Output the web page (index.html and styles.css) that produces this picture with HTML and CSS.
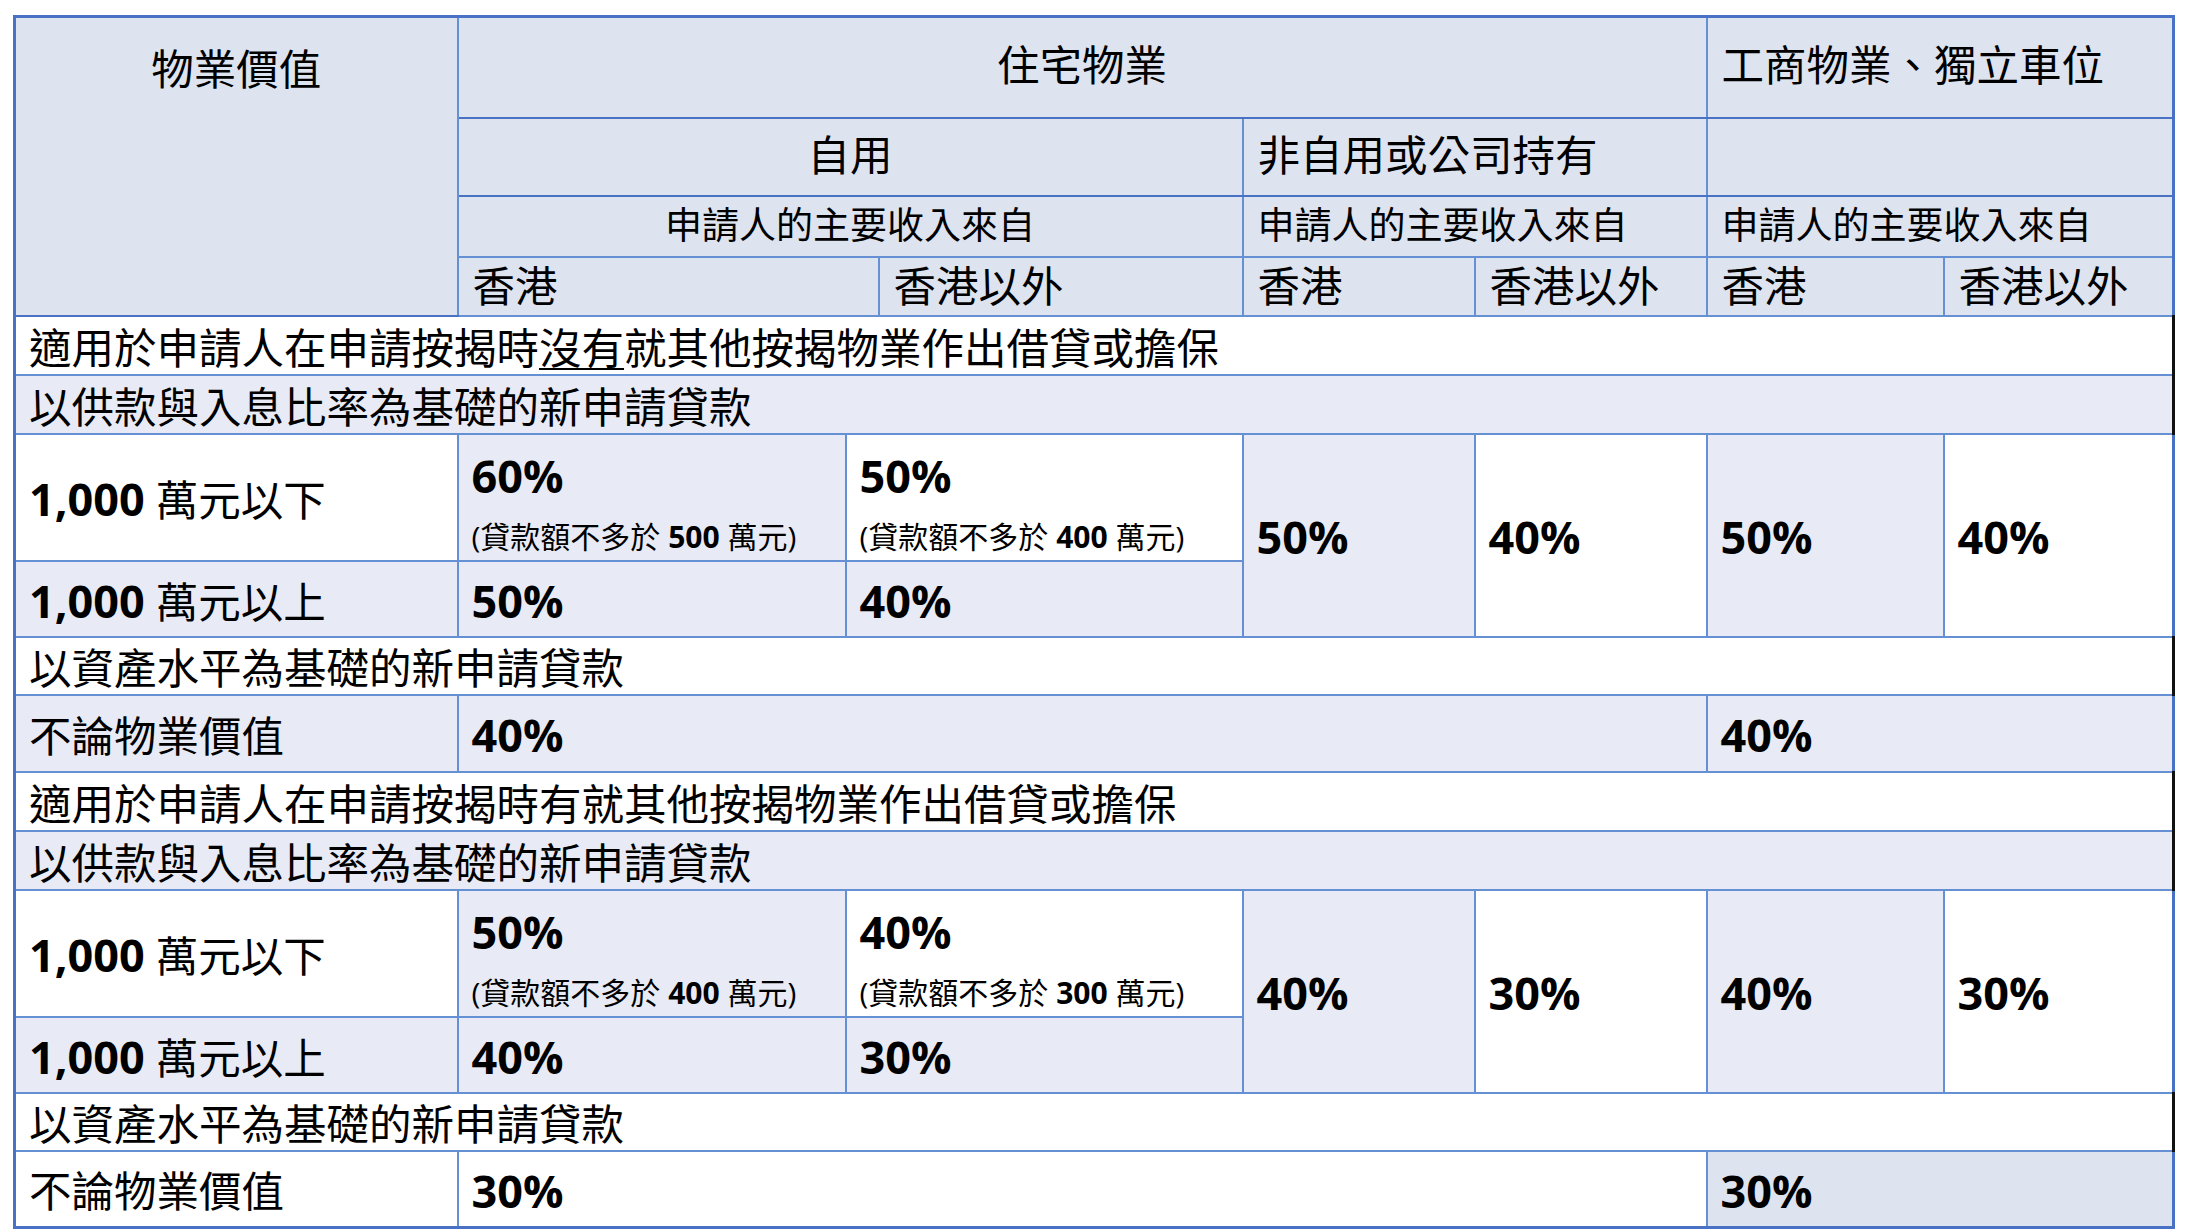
FILE: index.html
```html
<!DOCTYPE html>
<html lang="zh-Hant">
<head>
<meta charset="utf-8">
<title>按揭成數上限</title>
<link rel="stylesheet" href="styles.css">
</head>
<body>
<div class="page">
<table class="ltv">
  <colgroup>
    <col class="c1"><col class="c2"><col class="c3"><col class="c4"><col class="c5"><col class="c6"><col class="c7"><col class="c8">
  </colgroup>
  <tr class="h1">
    <th class="corner" rowspan="4">物業價值</th>
    <th class="center" colspan="5">住宅物業</th>
    <th colspan="2">工商物業、獨立車位</th>
  </tr>
  <tr class="h2">
    <th class="center" colspan="3">自用</th>
    <th colspan="2">非自用或公司持有</th>
    <th colspan="2"></th>
  </tr>
  <tr class="h3">
    <th class="center" colspan="3">申請人的主要收入來自</th>
    <th colspan="2">申請人的主要收入來自</th>
    <th colspan="2">申請人的主要收入來自</th>
  </tr>
  <tr class="h4">
    <th colspan="2">香港</th>
    <th>香港以外</th>
    <th>香港</th>
    <th>香港以外</th>
    <th>香港</th>
    <th>香港以外</th>
  </tr>

  <tr class="sec">
    <td class="full" colspan="8">適用於申請人在申請按揭時<u>沒有</u>就其他按揭物業作出借貸或擔保</td>
  </tr>
  <tr class="sub">
    <td class="full lt" colspan="8">以供款與入息比率為基礎的新申請貸款</td>
  </tr>
  <tr class="lo">
    <td class="lbl"><b>1,000</b> 萬元以下</td>
    <td class="lt"><span class="pct">60%</span><span class="note">(貸款額不多於 <b>500</b> 萬元)</span></td>
    <td colspan="2"><span class="pct">50%</span><span class="note">(貸款額不多於 <b>400</b> 萬元)</span></td>
    <td class="lt big" rowspan="2">50%</td>
    <td class="big" rowspan="2">40%</td>
    <td class="lt big" rowspan="2">50%</td>
    <td class="big" rowspan="2">40%</td>
  </tr>
  <tr class="hi">
    <td class="lt lbl"><b>1,000</b> 萬元以上</td>
    <td class="lt big">50%</td>
    <td class="lt big" colspan="2">40%</td>
  </tr>
  <tr class="asset">
    <td class="full" colspan="8">以資產水平為基礎的新申請貸款</td>
  </tr>
  <tr class="any">
    <td class="lt">不論物業價值</td>
    <td class="lt big" colspan="5">40%</td>
    <td class="lt big" colspan="2">40%</td>
  </tr>

  <tr class="sec">
    <td class="full" colspan="8">適用於申請人在申請按揭時有就其他按揭物業作出借貸或擔保</td>
  </tr>
  <tr class="sub">
    <td class="full lt" colspan="8">以供款與入息比率為基礎的新申請貸款</td>
  </tr>
  <tr class="lo">
    <td class="lbl"><b>1,000</b> 萬元以下</td>
    <td class="lt"><span class="pct">50%</span><span class="note">(貸款額不多於 <b>400</b> 萬元)</span></td>
    <td colspan="2"><span class="pct">40%</span><span class="note">(貸款額不多於 <b>300</b> 萬元)</span></td>
    <td class="lt big" rowspan="2">40%</td>
    <td class="big" rowspan="2">30%</td>
    <td class="lt big" rowspan="2">40%</td>
    <td class="big" rowspan="2">30%</td>
  </tr>
  <tr class="hi">
    <td class="lt lbl"><b>1,000</b> 萬元以上</td>
    <td class="lt big">40%</td>
    <td class="lt big" colspan="2">30%</td>
  </tr>
  <tr class="asset">
    <td class="full" colspan="8">以資產水平為基礎的新申請貸款</td>
  </tr>
  <tr class="any">
    <td>不論物業價值</td>
    <td class="big" colspan="5">30%</td>
    <td class="hd big" colspan="2">30%</td>
  </tr>
</table>
</div>
</body>
</html>
```

FILE: styles.css
```css
html, body {
  margin: 0;
  padding: 0;
  background: #ffffff;
}

.page {
  padding: 15px 0 0 13px;
}

.ltv {
  border-collapse: collapse;
  table-layout: fixed;
  width: 2159px;
  border: 3px solid #4a72c4;
  font-family: "Open Sans", "Noto Sans CJK TC", sans-serif;
  color: #000000;
}

.c1 { width: 443px; }
.c2 { width: 388px; }
.c3 { width: 33px; }
.c4 { width: 364px; }
.c5 { width: 232px; }
.c6 { width: 232px; }
.c7 { width: 237px; }
.c8 { width: 230px; }

.ltv th,
.ltv td {
  border: 2px solid #6690d4;
  padding: 4px 13px 0 13px;
  font-size: 42.5px;
  line-height: 1.2;
  font-weight: 400;
  text-align: left;
  vertical-align: middle;
  white-space: nowrap;
  background: #ffffff;
}

.ltv th {
  background: #dde3ef;
  padding: 0 14px 5px 14px;
}

.ltv .h1 th,
.ltv .h2 th {
  border-top-color: #4a72c4;
  border-bottom-color: #4a72c4;
}

.ltv .h3 th,
.ltv .h4 th {
  padding-bottom: 2px;
}

.ltv th.center {
  text-align: center;
}

.ltv th.corner {
  vertical-align: top;
  text-align: center;
  padding-top: 25px;
}

.h1 { height: 101px; }
.h2 { height: 78px; }
.h3 { height: 61px; }
.h4 { height: 59px; }

.ltv .h3 th {
  font-size: 37px;
}

.sec { height: 59px; }
.sub { height: 59px; }
.lo { height: 127px; }
.hi { height: 76px; }
.asset { height: 58px; }
.any { height: 77px; }

.ltv td.full {
  border-right: 3px solid #111111;
}

.ltv .sub td,
.ltv .lo td,
.ltv .sec td {
  border-top-color: #5b86cf;
}

.ltv td.lt {
  background: #e8ebf5;
}

.ltv td.hd {
  background: #dde4f0;
}

.ltv td.big,
.pct,
.ltv td.lbl b {
  font-weight: 700;
  font-size: 45px;
}

.pct {
  display: block;
  line-height: 50px;
  padding-top: 10px;
}

.note {
  display: block;
  font-size: 30px;
  line-height: 40px;
  margin-top: 16px;
}

.note b {
  font-weight: 700;
}

u {
  text-decoration: underline;
  text-decoration-thickness: 2px;
  text-underline-offset: 4px;
}
```
